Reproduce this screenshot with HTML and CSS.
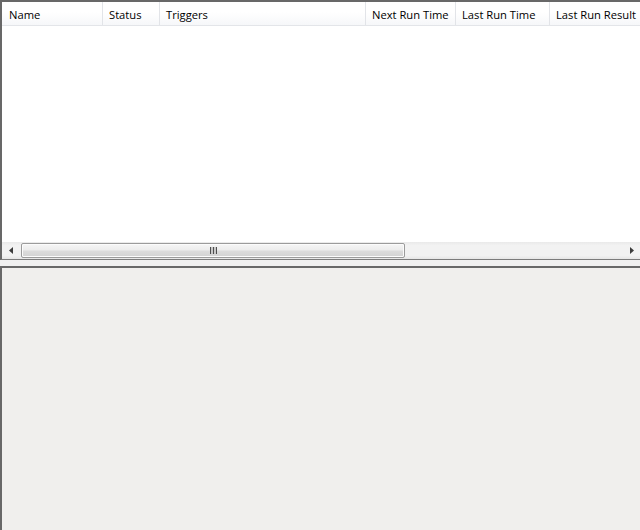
FILE: index.html
```html
<!DOCTYPE html>
<html lang="en">
<head>
    <meta charset="UTF-8">
    <title>Task List</title>
<link rel="stylesheet" href="styles.css">
</head>
<body>
    <div class="window">
        <!-- task list with column headers -->
        <div class="taskList">
            <div class="header">
                <div class="col colName">Name</div>
                <div class="col colStatus">Status</div>
                <div class="col colTriggers">Triggers</div>
                <div class="col colNext">Next Run Time</div>
                <div class="col colLast">Last Run Time</div>
                <div class="col colResult">Last Run Result</div>
            </div>
            <div class="rows"></div>
            <div class="hScroll">
                <div class="arrowBtn">
                    <svg width="4" height="7" viewBox="0 0 4 7"><path d="M4 0 L0 3.5 L4 7 Z" fill="#3c3c3c"/></svg>
                </div>
                <div class="track">
                    <div class="thumb"><span class="grip"></span></div>
                </div>
                <div class="arrowBtn">
                    <svg width="4" height="7" viewBox="0 0 4 7"><path d="M0 0 L4 3.5 L0 7 Z" fill="#3c3c3c"/></svg>
                </div>
            </div>
        </div>

        <!-- details pane -->
        <div class="details"></div>
    </div>
</body>
</html>
```

FILE: styles.css
```css
/* Task window layout */
body {
  margin: 0;
  padding: 0;
  background-color: #f0f0f0;
  font-family: "Open Sans", "Noto Sans", Arial, sans-serif;
  font-size: 11.2px;
  color: #000;
}

.window {
  height: 530px;
  width: 640px;
  display: flex;
  flex-direction: column;
  overflow: hidden;
}

.taskList {
  height: 260px;
  box-sizing: border-box;
  border-top: 2px solid #686868;
  border-left: 2px solid #686868;
  border-bottom: 1px solid #7c7c7c;
  background-color: #fff;
  display: flex;
  flex-direction: column;
}

.header {
  height: 24px;
  box-sizing: border-box;
  display: flex;
  border-bottom: 1px solid #e3e5e9;
  background: linear-gradient(#ffffff, #ffffff 45%, #f6f7f9);
  white-space: nowrap;
}

.col {
  box-sizing: border-box;
  padding-left: 6px;
  padding-top: 2px;
  line-height: 21px;
  border-right: 1px solid #e2e4e8;
  overflow: hidden;
  flex-shrink: 0;
}

.colName { width: 101px; padding-left: 7px; }
.colStatus { width: 57px; }
.colTriggers { width: 206px; }
.colNext { width: 90px; }
.colLast { width: 94px; }
.colResult { width: 100px; border-right: none; }

.rows {
  flex: 1;
}

/* horizontal scrollbar */
.hScroll {
  height: 17px;
  display: flex;
  background: linear-gradient(#e9e9e9, #f2f2f2 20%, #f2f2f2 80%, #e6e6e6);
}

.arrowBtn {
  width: 17px;
  display: flex;
  align-items: center;
  justify-content: center;
}

.track {
  flex: 1;
  display: flex;
  align-items: center;
}

.thumb {
  margin-left: 2px;
  width: 384px;
  height: 15px;
  box-sizing: border-box;
  border: 1px solid #9b9b9b;
  border-radius: 2px;
  background: linear-gradient(#f6f6f6, #ececec 45%, #dcdcdc 55%, #d2d2d2);
  box-shadow: inset 0 0 0 1px #fbfbfb;
  display: flex;
  align-items: center;
  justify-content: center;
}

.grip {
  width: 7px;
  height: 7px;
  background: repeating-linear-gradient(90deg, #4f4f4f 0, #4f4f4f 1px, #c8c8c8 1px, #c8c8c8 3px);
}

/* lower details pane */
.details {
  margin-top: 6px;
  flex: 1;
  border-top: 2px solid #686868;
  border-left: 2px solid #686868;
  background-color: #f0efed;
}
```
